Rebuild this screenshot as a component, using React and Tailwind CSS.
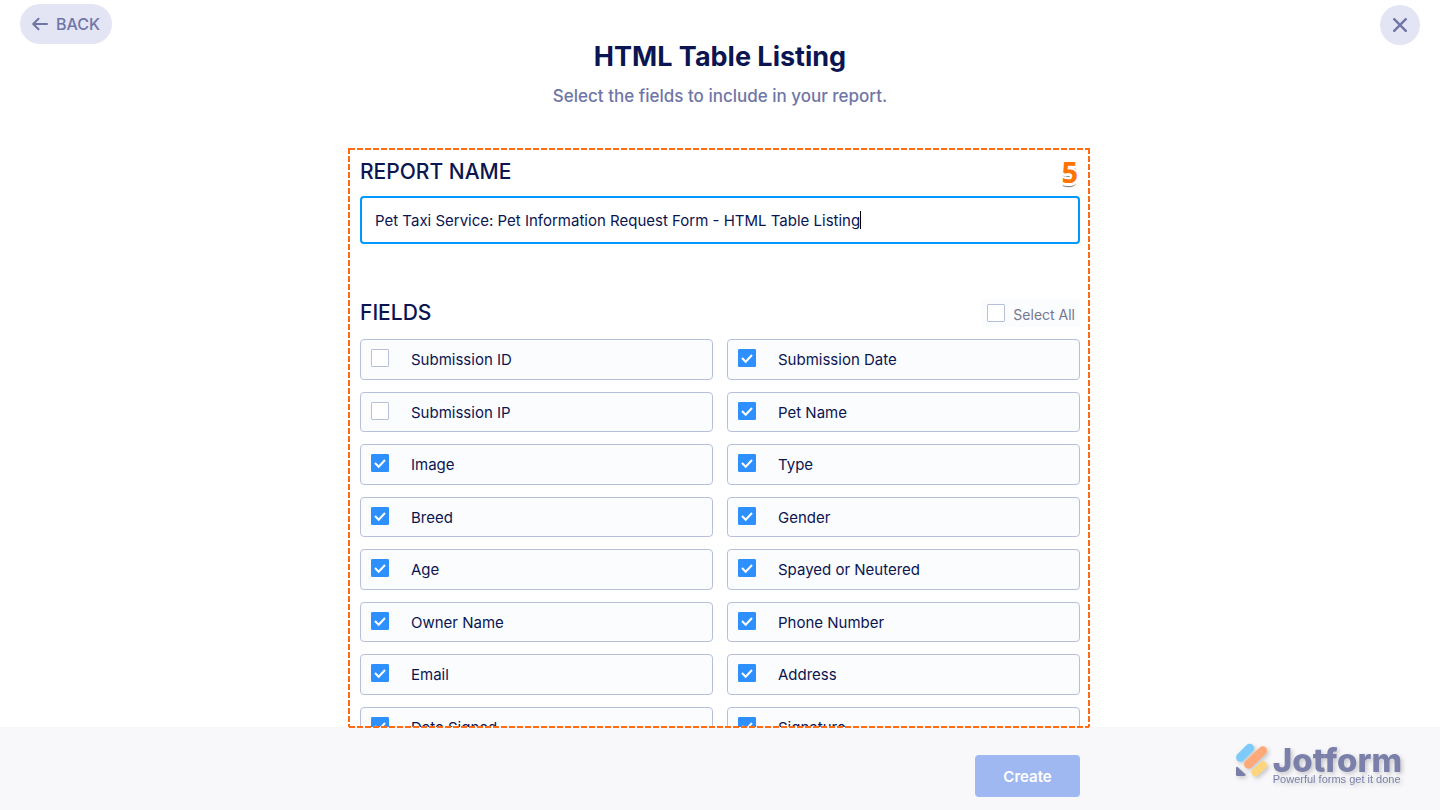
import { useState } from "react";

const FIELDS = [
  ["Submission ID", false],
  ["Submission Date", true],
  ["Submission IP", false],
  ["Pet Name", true],
  ["Image", true],
  ["Type", true],
  ["Breed", true],
  ["Gender", true],
  ["Age", true],
  ["Spayed or Neutered", true],
  ["Owner Name", true],
  ["Phone Number", true],
  ["Email", true],
  ["Address", true],
  ["Date Signed", true],
  ["Signature", true],
];

function Checkbox({ id, checked, onChange }) {
  return (
    <span className="mb-0.5 grid size-[18px] shrink-0">
      <input
        id={id}
        type="checkbox"
        checked={checked}
        onChange={onChange}
        className="col-start-1 row-start-1 size-[18px] appearance-none rounded-[1px] border border-[#b8bfdb] bg-white checked:border-[#2e90ff] checked:bg-[#2e90ff]"
      />
      {checked && (
        <svg viewBox="0 0 18 18" className="pointer-events-none col-start-1 row-start-1 size-[18px]" fill="none" aria-hidden="true">
          <path d="M4 9 7.700 12.800 14 6" stroke="#fff" strokeWidth="2" />
        </svg>
      )}
    </span>
  );
}

function FieldRow({ name, checked, onToggle }) {
  const id = "field-" + name.toLowerCase().replace(/ /g, "-");
  return (
    <div className="flex items-center gap-[22px] rounded-[4px] border border-[#b8bfdb] bg-[#fbfcfe] px-2.5">
      <Checkbox id={id} checked={checked} onChange={onToggle} />
      <label htmlFor={id} className="flex-1 pt-0.5 text-[15px] leading-5">{name}</label>
    </div>
  );
}

function Logo() {
  return (
    <div className="flex items-start gap-1 drop-shadow-[2px_2px_2px_rgba(0,0,0,0.2)]">
      <svg viewBox="40 36 105 111" className="h-[37px] w-[35px]" fill="none" strokeLinecap="round" aria-hidden="true">
        <path d="M59 82 87 54" stroke="#7ccbfb" strokeWidth="26" />
        <path d="M83 103 126 62" stroke="#ffa878" strokeWidth="26" />
        <path d="M104 127 127 106" stroke="#fed57f" strokeWidth="24" />
        <path d="M51 111 74 133q2 5-3 5H50q-4 0-4-4V113q1-4 5-2Z" fill="#7a7fa8" />
      </svg>
      <div className="pt-1.5 text-[#7a80a9]">
        <p className="text-[33px] leading-[25px] font-extrabold">Jotform</p>
        <p className="font-['Liberation_Sans',sans-serif] text-[11px] leading-3">Powerful forms get it done</p>
      </div>
    </div>
  );
}

export default function App() {
  const [name, setName] = useState("Pet Taxi Service: Pet Information Request Form - HTML Table Listing");
  const [fields, setFields] = useState(FIELDS);
  const all = fields.every((f) => f[1]);
  const toggle = (i) => setFields(fields.map((f, j) => (j === i ? [f[0], !f[1]] : f)));

  return (
    <div className="flex h-screen flex-col bg-white font-[Inter,sans-serif] text-[#0a1551]">
      <header className="grid grid-cols-[1fr_auto_1fr] items-start px-5 pt-1 pb-10">
        <button type="button" className="flex h-10 items-center gap-2 justify-self-start rounded-full bg-[#e3e5f5] px-3 text-base font-medium text-[#6f76a7]">
          <svg viewBox="0 0 16 14" className="h-3.5 w-4" fill="none" stroke="currentColor" strokeWidth="2" strokeLinecap="round" strokeLinejoin="round" aria-hidden="true">
            <path d="M15 7H1.500M6.500 1.700 1.200 7l5.300 5.300" />
          </svg>
          BACK
        </button>
        <div className="pt-[35px] text-center">
          <h1 className="text-[27px] leading-9 font-bold">HTML Table Listing</h1>
          <p className="mt-[9px] text-[17px] leading-6 font-medium text-[#6f76a7]">Select the fields to include in your report.</p>
        </div>
        <button type="button" aria-label="Close" className="mt-px grid size-10 place-items-center justify-self-end rounded-full bg-[#e3e5f5] text-[#6f76a7]">
          <svg viewBox="0 0 14 14" className="size-3.5" stroke="currentColor" strokeWidth="2.400" strokeLinecap="round" aria-hidden="true">
            <path d="M1.200 1.200 12.800 12.800M12.800 1.200 1.200 12.800" />
          </svg>
        </button>
      </header>

      <main className="relative mx-auto min-h-0 w-full max-w-[720px] flex-1">
        <div className="h-full overflow-hidden pt-2.5">
          <div className="flex items-center justify-between">
            <label htmlFor="report-name" className="text-[21px] leading-7 font-medium">REPORT NAME</label>
            <span className="mr-0.5 font-['Open_Sans',sans-serif] text-[29px] leading-[26px] font-bold text-[#ff7300] [text-shadow:2px_0_#fff,-2px_0_#fff,0_2px_#fff,0_-2px_#fff,2px_2px_#fff,-2px_2px_#fff,0_3px_#fff,0_4px_1px_#777]">5</span>
          </div>
          <div className="mt-2.5 flex h-12 items-center rounded-[4px] border-2 border-[#0099ff] px-[13px]">
            <input
              id="report-name"
              type="text"
              value={name}
              onChange={(e) => setName(e.target.value)}
              className="field-sizing-content max-w-full pt-0.5 text-[15px] leading-5 outline-none"
            />
            <span className="h-[18px] w-px bg-black" />
          </div>

          <div className="mt-[55px] flex items-center justify-between">
            <h2 className="text-[21px] leading-7 font-medium">FIELDS</h2>
            <div className="flex items-center gap-2 rounded-[3px] bg-[#fbfcfe] px-[5px] pt-1 pb-0.5">
              <Checkbox
                id="select-all"
                checked={all}
                onChange={() => setFields(fields.map((f) => [f[0], !all]))}
              />
              <label htmlFor="select-all" className="pt-0.5 text-sm leading-5 text-[#73788f]">Select All</label>
            </div>
          </div>
          <div className="mt-3 grid min-h-[408px] auto-rows-fr grid-cols-2 gap-x-3.5 gap-y-3">
            {fields.map(([label, checked], i) => (
              <FieldRow key={label} name={label} checked={checked} onToggle={() => toggle(i)} />
            ))}
          </div>
        </div>
        <div className="pointer-events-none absolute top-0 -right-[9px] bottom-0 -left-[11px] z-10">
          <svg className="block size-full overflow-visible" fill="none" stroke="#ff6a13" strokeWidth="2" strokeDasharray="6 2" aria-hidden="true">
            <line x1="0" y1="1" x2="100%" y2="1" />
            <line x1="0" y1="0" x2="0" y2="100%" />
            <line x1="100%" y1="0" x2="100%" y2="100%" />
            <line x1="0" y1="100%" x2="100%" y2="100%" />
          </svg>
        </div>
      </main>

      <footer className="grid h-[83px] shrink-0 grid-cols-[1fr_minmax(0,720px)_1fr] items-start bg-[#f8f8fb]">
        <div className="col-start-2 flex justify-end pt-7">
          <button type="button" className="h-[42px] w-[105px] rounded-[4px] bg-[#9fb8f2] pt-0.5 text-[15px] font-semibold text-white">Create</button>
        </div>
        <div className="flex justify-end pt-[15px] pr-[38px]">
          <Logo />
        </div>
      </footer>
    </div>
  );
}
